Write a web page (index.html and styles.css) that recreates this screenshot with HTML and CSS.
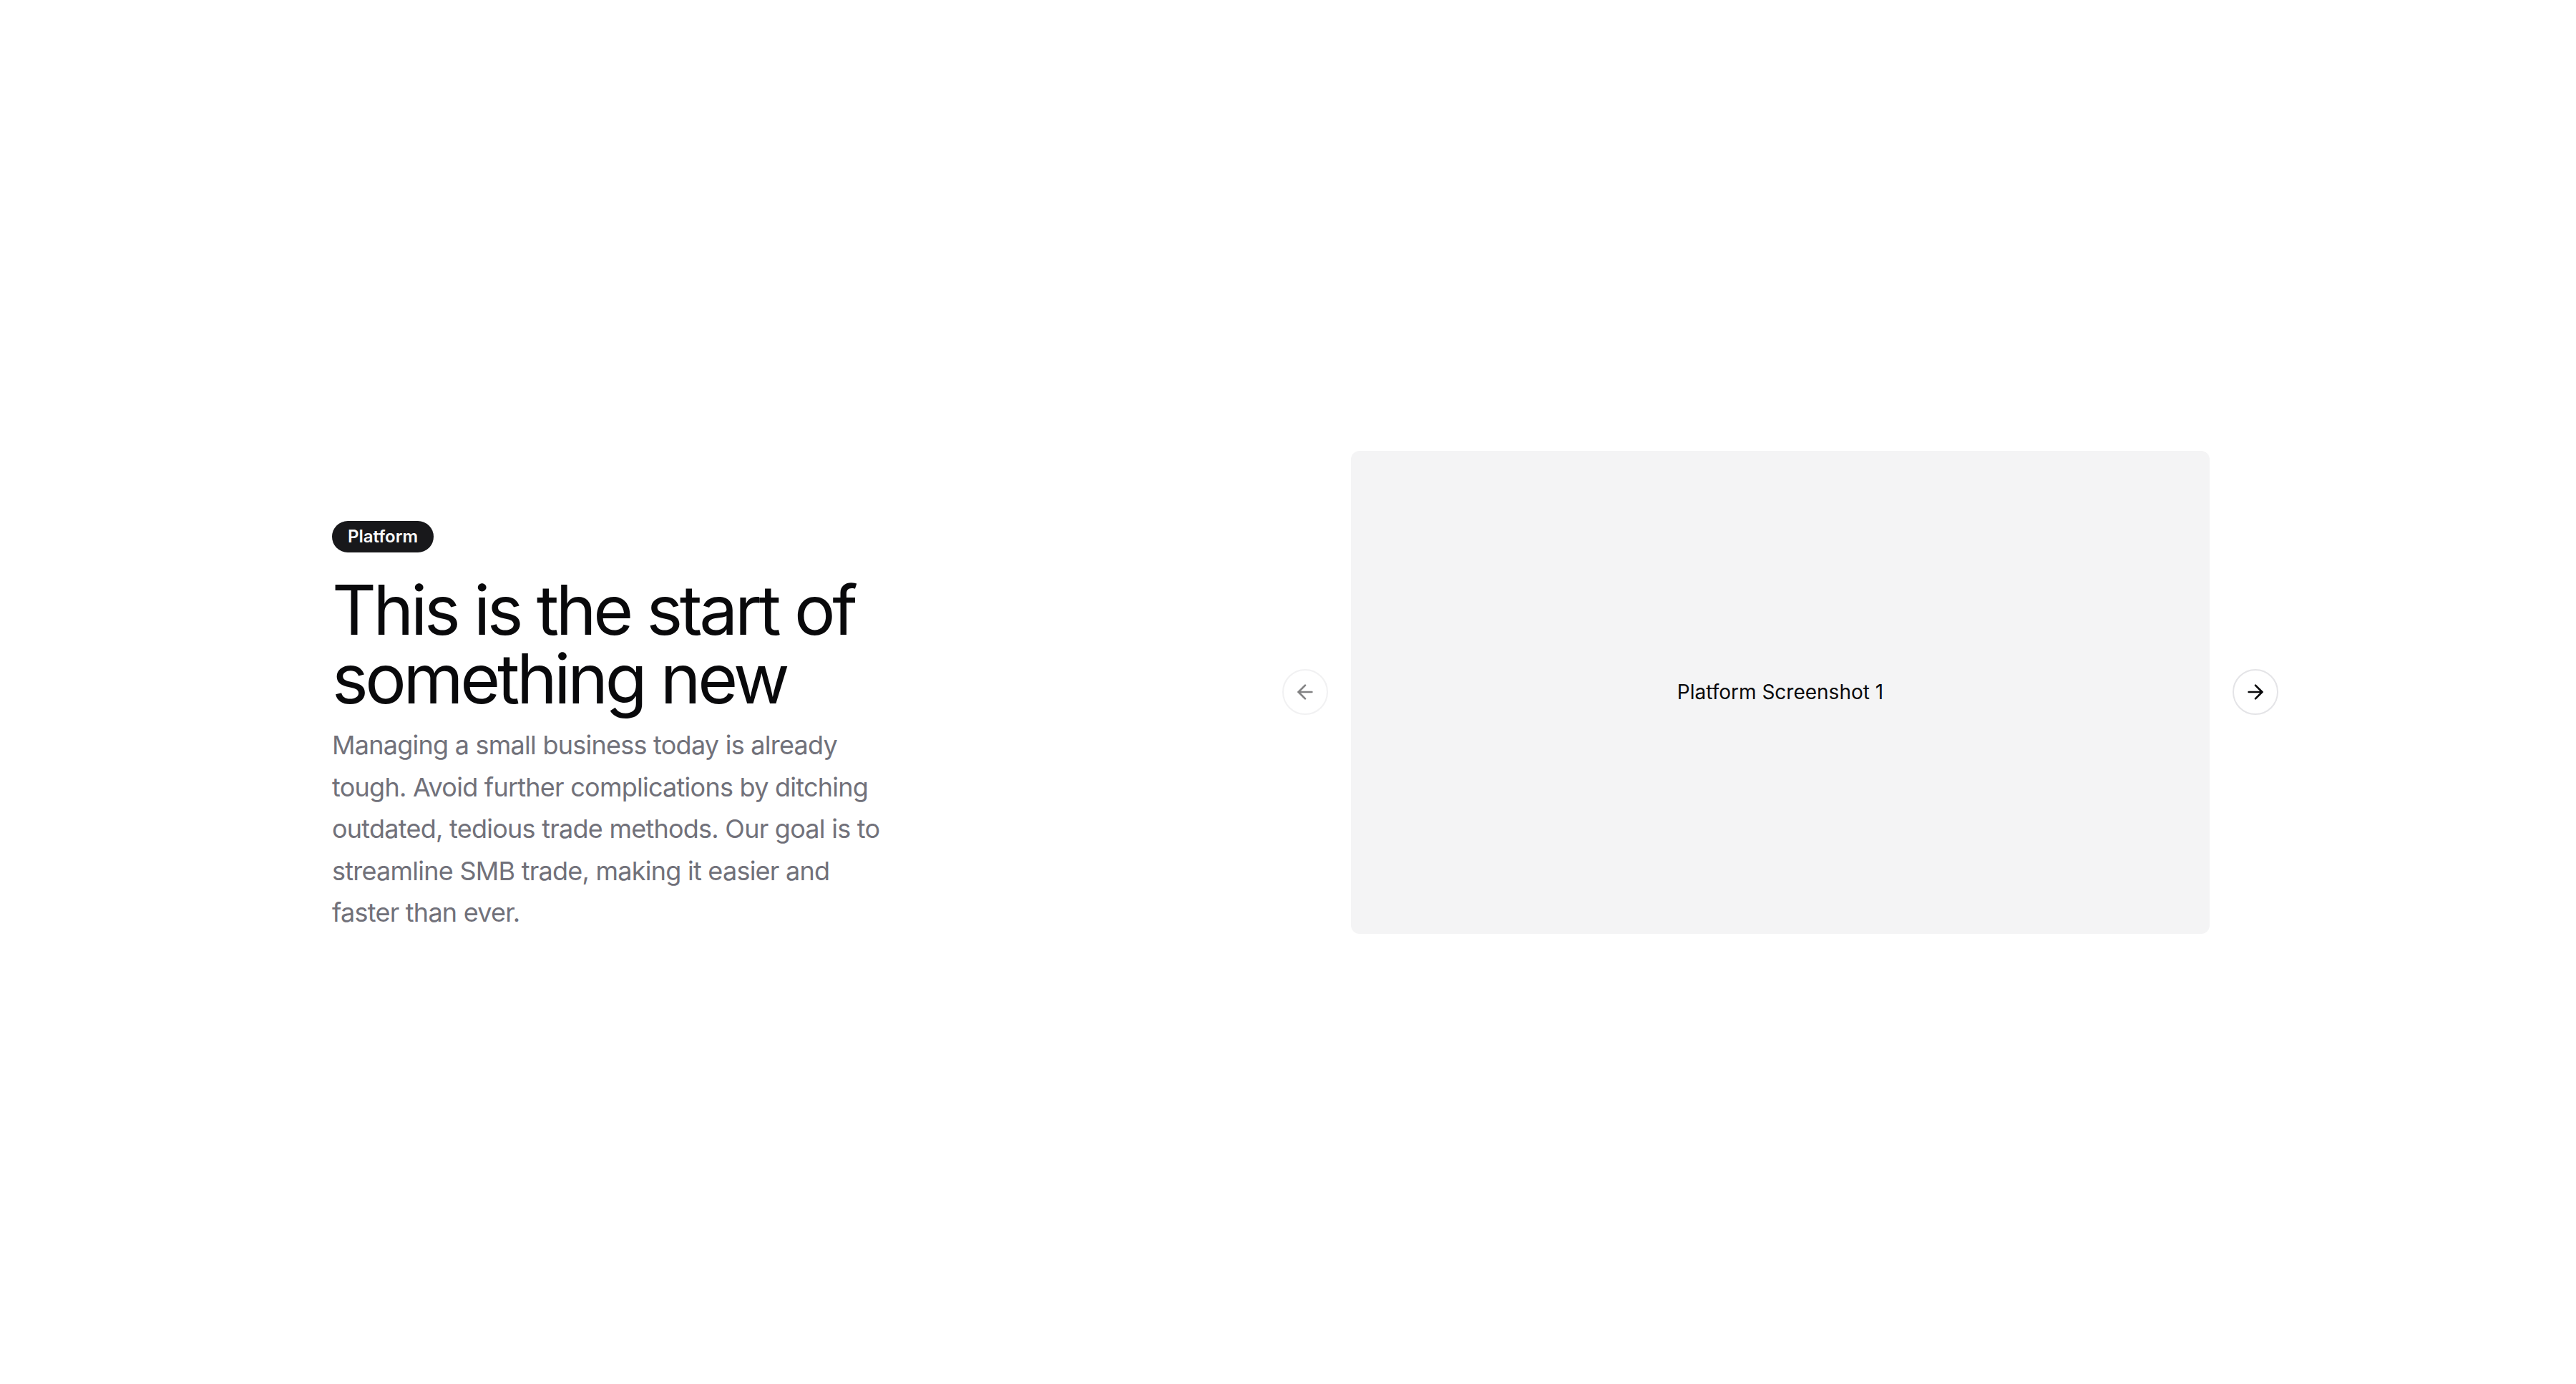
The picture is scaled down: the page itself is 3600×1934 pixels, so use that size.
FILE: index.html
```html
<!DOCTYPE html>
<html lang="en">
<head>
<meta charset="utf-8">
<title>Platform</title>
<link rel="stylesheet" href="styles.css">
</head>
<body>
<main class="page">
  <section class="feature">
    <div class="intro">
      <span class="badge">Platform</span>
      <div class="copy">
        <h2 class="title">This is the start of something new</h2>
        <p class="lead">Managing a small business today is already tough. Avoid further complications by ditching outdated, tedious trade methods. Our goal is to streamline SMB trade, making it easier and faster than ever.</p>
      </div>
    </div>
    <div class="carousel-col">
      <div class="carousel">
        <div class="slide">
          <span class="slide-label">Platform Screenshot 1</span>
        </div>
        <button class="nav nav-prev" disabled aria-label="Previous slide">
          <svg viewBox="0 0 24 24" width="32" height="32" fill="none" stroke="currentColor" stroke-width="2" stroke-linecap="round" stroke-linejoin="round"><path d="m12 19-7-7 7-7"/><path d="M19 12H5"/></svg>
        </button>
        <button class="nav nav-next" aria-label="Next slide">
          <svg viewBox="0 0 24 24" width="32" height="32" fill="none" stroke="currentColor" stroke-width="2" stroke-linecap="round" stroke-linejoin="round"><path d="M5 12h14"/><path d="m12 5 7 7-7 7"/></svg>
        </button>
      </div>
    </div>
  </section>
</main>
</body>
</html>
```

FILE: styles.css
```css
* { box-sizing: border-box; }

html, body {
  margin: 0;
  padding: 0;
  background: #ffffff;
}

body {
  font-family: Inter, "Noto Sans", "Liberation Sans", sans-serif;
  color: #09090b;
}

.page {
  min-height: 100vh;
  display: flex;
  align-items: center;
  justify-content: center;
}

.feature {
  width: 2672px;
  display: grid;
  grid-template-columns: 1fr 1fr;
  column-gap: 80px;
  align-items: end;
}

.intro {
  display: flex;
  flex-direction: column;
  align-items: flex-start;
  gap: 32px;
}

.badge {
  display: inline-flex;
  align-items: center;
  background: #18181b;
  color: #fafafa;
  border: 2px solid transparent;
  border-radius: 9999px;
  padding: 4px 20px;
  font-size: 24px;
  line-height: 32px;
  font-weight: 600;
}

.copy {
  display: flex;
  flex-direction: column;
  gap: 16px;
}

.title {
  margin: 0;
  font-size: 96px;
  line-height: 1;
  font-weight: 400;
  letter-spacing: -4.35px;
  max-width: 1152px;
  color: #09090b;
}

.lead {
  margin: 0;
  max-width: 768px;
  font-size: 36px;
  line-height: 1.625;
  letter-spacing: -0.75px;
  color: #71717a;
}

.carousel-col {
  padding: 0 48px;
}

.carousel {
  position: relative;
}

.slide {
  aspect-ratio: 16 / 9;
  width: 100%;
  background: #f4f4f5;
  border-radius: 12px;
  display: flex;
  align-items: center;
  justify-content: center;
}

.slide-label {
  font-size: 28px;
  line-height: 40px;
  color: #09090b;
}

.nav {
  position: absolute;
  top: 50%;
  transform: translateY(-50%);
  width: 64px;
  height: 64px;
  border-radius: 50%;
  border: 2px solid #e4e4e7;
  background: #ffffff;
  color: #09090b;
  display: flex;
  align-items: center;
  justify-content: center;
  padding: 0;
  cursor: pointer;
}

.nav:disabled {
  opacity: 0.5;
  cursor: default;
}

.nav-prev { left: -96px; }
.nav-next { right: -96px; }
```
